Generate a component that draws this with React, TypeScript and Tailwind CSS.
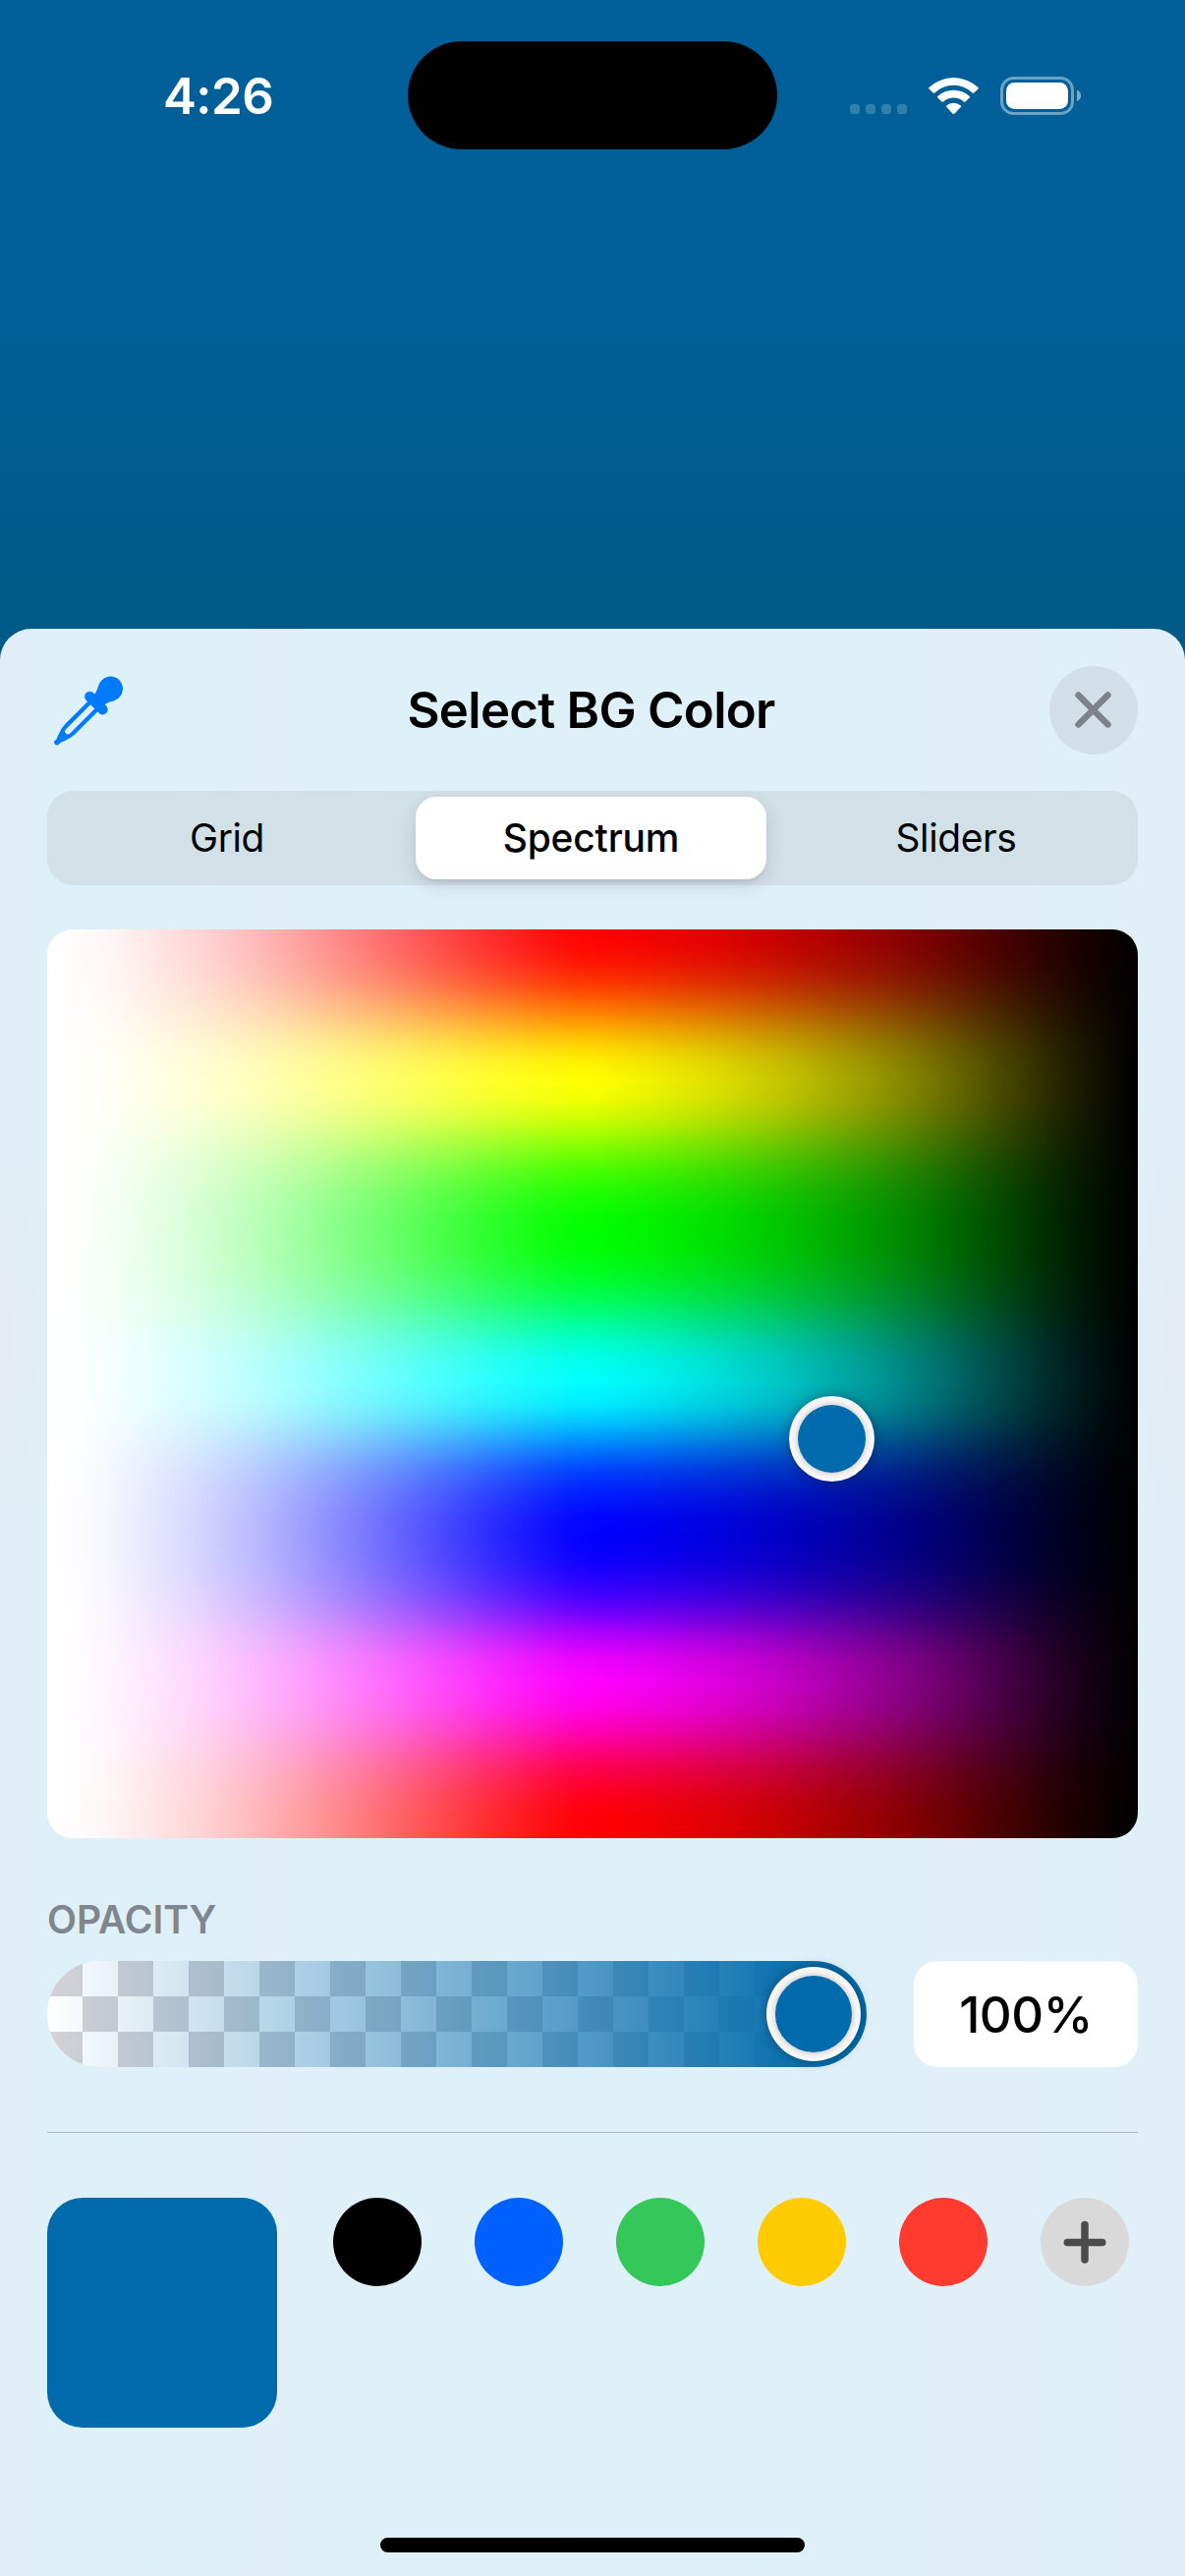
import React from "react";

const HUE =
  "linear-gradient(180deg,#ff0000 0%,#ff0600 1.8%,#ff1800 3.9%,#ff3800 6%,#ff6400 8%,#ff9200 9.9%,#ffb400 11.3%,#ffd600 12.9%,#fff200 14.7%,#ffff00 16.67%,#f0ff00 18.9%,#c4ff00 21.3%,#84ff00 23.9%,#4aff00 26.4%,#1eff00 29%,#06ff00 31.5%,#00ff00 33.3%,#00ff08 35.5%,#00ff24 38%,#00ff54 40.6%,#00ff96 43.2%,#00ffc6 45.1%,#00ffec 47.2%,#00ffff 49.8%,#00ecff 52.2%,#00c6ff 54.2%,#0096ff 56.1%,#0074ff 57.4%,#0046ff 59.3%,#001eff 61.9%,#0006ff 64.6%,#0000ff 66.67%,#0a00ff 69%,#2200ff 71.2%,#4a00ff 73.6%,#8800ff 76.1%,#bc00ff 78%,#ea00ff 80.2%,#ff00ff 82.9%,#ff00e6 85.7%,#ff00b2 88.3%,#ff0070 90.9%,#ff0044 92.8%,#ff001a 95.4%,#ff0006 97.6%,#ff0000 100%)";
const LIGHT =
  "linear-gradient(90deg,rgba(255,255,255,1) 0%,rgba(255,255,255,.99) 3%,rgba(255,255,255,.965) 5.500%,rgba(255,255,255,.915) 9%,rgba(255,255,255,.83) 14%,rgba(255,255,255,.73) 19%,rgba(255,255,255,.62) 23.500%,rgba(255,255,255,.49) 28.500%,rgba(255,255,255,.345) 34%,rgba(255,255,255,.19) 40%,rgba(255,255,255,.075) 45%,rgba(255,255,255,.02) 48%,rgba(255,255,255,0) 50.500%)";
const DARK =
  "linear-gradient(90deg,rgba(0,0,0,0) 50%,rgba(0,0,0,.05) 55.500%,rgba(0,0,0,.13) 61.500%,rgba(0,0,0,.22) 67%,rgba(0,0,0,.32) 72%,rgba(0,0,0,.43) 77%,rgba(0,0,0,.55) 81.600%,rgba(0,0,0,.685) 86.500%,rgba(0,0,0,.815) 91.300%,rgba(0,0,0,.905) 95%,rgba(0,0,0,.965) 98%,rgba(0,0,0,1) 100%)";
const CHECKS = "repeating-conic-gradient(#ffffff 0% 25%,#d4d3d6 0% 50%)";

const swatches = ["bg-black", "bg-[#0061fe]", "bg-[#34c759]", "bg-[#ffcc02]", "bg-[#ff3b30]"];

function StatusBar() {
  return (
    <div className="flex h-[160px] items-start">
      <div className="w-[415px] pt-[66px] pl-[166px] text-[51px] leading-[64px] font-semibold tracking-[-0.6px] text-white">4:26</div>
      <div className="mt-[42px] h-[110px] w-[376px] rounded-[55px] bg-black" />
      <svg className="mt-[70px] ml-[64px]" width="260" height="56" viewBox="855 70 260 56">
        <g fill="#fff" fillOpacity=".2">
          <rect x="865" y="106" width="10" height="10" rx="3.5" />
          <rect x="881" y="106" width="10" height="10" rx="3.5" />
          <rect x="897" y="106" width="10" height="10" rx="3.5" />
          <rect x="913" y="106" width="10" height="10" rx="3.5" />
        </g>
        <g fill="#fff">
          <path d="M945.500 89a36.500 36.500 0 0 1 50 0q.6.7 0 1.400l-4.200 4.100q-.8.7-1.600 0a27.500 27.500 0 0 0-38.400 0q-.8.7-1.600 0l-4.200-4.100q-.6-.7 0-1.400z" />
          <path d="M954.300 98a24 24 0 0 1 32.400 0q.8.7 0 1.500l-4.200 4.100q-.8.7-1.600 0a15.500 15.500 0 0 0-20.800 0q-.8.7-1.600 0l-4.200-4.100q-.8-.8 0-1.500z" />
          <path d="M963.200 107.400a11.500 11.500 0 0 1 14.600 0q.8.7 0 1.500l-6.500 6.800q-.8.7-1.600 0l-6.500-6.800q-.8-.8 0-1.500z" />
          <rect x="1024" y="84" width="63" height="27" rx="8.500" />
        </g>
        <rect x="1019.500" y="79.500" width="72" height="36" rx="12" fill="none" stroke="#fff" strokeOpacity=".42" strokeWidth="3" />
        <path d="M1096 91.500q4 1.500 4 5.800t-4 5.800z" fill="#fff" fillOpacity=".48" />
      </svg>
    </div>
  );
}

function Eyedropper() {
  return (
    <svg className="block" width="84" height="84" viewBox="48 681 84 84">
      <g transform="translate(56 757.5) rotate(45)" fill="#007aff">
        <path d="M-7.200 -60V-22Q-7.200 -17 -5 -11L-2.600 -4.500L-2.800 -1.500Q-2 0 0 0Q2 0 2.800 -1.500L2.600 -4.500L5 -11Q7.200 -17 7.200 -22V-60Z M-3 -56H3V-19Q3 -15.500 0 -15.500Q-3 -15.500 -3 -19Z" fillRule="evenodd" />
        <rect x="-14.500" y="-64.500" width="29" height="10.500" rx="5.250" />
        <path d="M-7.500 -62Q-7 -66 -9.500 -70.500Q-12.500 -76 -12.400 -80A12.400 12.400 0 0 1 12.400 -80Q12.500 -76 9.500 -70.500Q7 -66 7.500 -62Z" />
      </g>
    </svg>
  );
}

function Knob({ className }: { className: string }) {
  return (
    <div className={"rounded-full bg-[#f8f8f8] p-[9px] shadow-[0_0_12px_rgba(0,0,0,0.35)] " + className}>
      <div className="h-full w-full rounded-full bg-[#006bac] shadow-[0_0_7px_rgba(0,0,0,0.25)]" />
    </div>
  );
}

export default function App() {
  return (
    <div className="h-[2622px] w-[1206px] overflow-hidden bg-[linear-gradient(180deg,#005f98_0px,#005f98_340px,#005a88_600px,#005986_700px)] font-['Inter','Liberation_Sans',sans-serif] text-black">
      <StatusBar />
      <div className="mt-[480px] flex h-[1982px] flex-col rounded-t-[32px] bg-[radial-gradient(ellipse_60px_260px_at_0px_720px,#e3ebf2,transparent),radial-gradient(ellipse_60px_260px_at_1206px_720px,#e3ebf2,transparent),linear-gradient(90deg,#e1eff8_0px,#def0f8_60px,#dff0f8_180px,#e0eff8_280px,#def0f8_400px,#dff0f8_880px,#e1eff8_1010px,#dff0f8_1090px,#e1eff8_1180px)] px-[48px]">
        <header className="mt-[38px] flex h-[90px] items-center justify-between">
          <div className="w-[90px]"><Eyedropper /></div>
          <h1 className="pr-[3px] text-[51px] leading-[60px] font-semibold tracking-[-0.75px]">Select BG Color</h1>
          <button className="flex h-[90px] w-[90px] items-center justify-center rounded-full bg-[#d2dfe8]">
            <svg width="40" height="40" viewBox="0 0 40 40" stroke="#7c828a" strokeWidth="6.500" strokeLinecap="round">
              <path d="M4.500 4.500L34.500 34.500M34.500 4.500L4.500 34.500" />
            </svg>
          </button>
        </header>
        <div className="mt-[37px] grid h-[96px] grid-cols-3 rounded-[27px] bg-[#d2e0e8] py-[6px] text-[39px] leading-[84px]">
          <div className="pr-[4px] text-center tracking-[-0.4px]">Grid</div>
          <div className="mr-[8px] ml-[5px] rounded-[21px] bg-white text-center font-medium tracking-[-0.2px] shadow-[0_6px_20px_rgba(0,0,0,0.12),0_3px_3px_rgba(0,0,0,0.05)]">Spectrum</div>
          <div className="text-center tracking-[-0.4px]">Sliders</div>
        </div>
        <div className="relative mt-[45px] h-[925px] shrink-0 rounded-[26px]" style={{ backgroundImage: `${LIGHT},${DARK},${HUE}` }}>
          <Knob className="absolute top-[475px] left-[755px] h-[87px] w-[87px]" />
        </div>
        <div className="mt-[60px] h-[46px] text-[39px] leading-[46px] font-semibold tracking-[0px] text-[#7f868e]">OPACITY</div>
        <div className="mt-[19px] flex h-[108px] items-center justify-between">
          <div
            className="flex h-[108px] w-[834px] items-center justify-end rounded-[54px] pr-[6px]"
            style={{
              backgroundImage: `linear-gradient(90deg,rgba(0,107,172,0) 0%,rgba(0,107,172,1) 96%),${CHECKS}`,
              backgroundSize: "100% 100%, 72px 72px",
            }}
          >
            <Knob className="h-[96px] w-[96px]" />
          </div>
          <div className="h-[108px] w-[228px] rounded-[24px] bg-white text-center text-[51px] leading-[110px] font-medium tracking-[-0.5px]">100%</div>
        </div>
        <div className="mt-[66px] h-px bg-[#adbac4]" />
        <div className="mt-[66px] flex items-start">
          <div className="h-[234px] w-[234px] rounded-[36px] bg-[#006bac]" />
          <div className="ml-[57px] flex gap-[54px]">
            {swatches.map((c) => (
              <div key={c} className={"h-[90px] w-[90px] rounded-full " + c} />
            ))}
            <div className="flex h-[90px] w-[90px] items-center justify-center rounded-full bg-[#d9d9d9]">
              <svg width="44" height="44" viewBox="0 0 44 44" stroke="#4b4b4b" strokeWidth="7.500" strokeLinecap="round">
                <path d="M22 4.500V40M4.300 22.500H39.800" />
              </svg>
            </div>
          </div>
        </div>
        <div className="mx-auto mt-[112px] h-[15px] w-[432px] rounded-full bg-black" />
      </div>
    </div>
  );
}
